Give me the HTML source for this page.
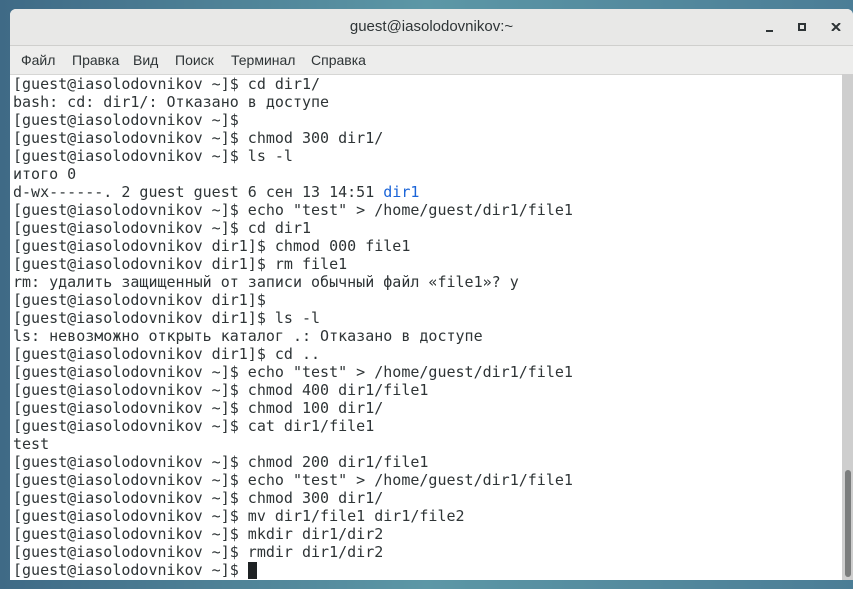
<!DOCTYPE html>
<html><head><meta charset="utf-8"><style>
body{margin:0;width:853px;height:589px;overflow:hidden;background:linear-gradient(90deg,#3f6a86 0%,#5c97a6 50%,#4b7d96 100%);position:relative;font-family:"Liberation Sans","DejaVu Sans",sans-serif}
.win{position:absolute;left:10px;top:9px;width:843px;height:571px;background:#fff;border-radius:6px 6px 0 0;overflow:hidden}
.title{height:36px;background:#e8e8e7;border-bottom:1px solid #cfcfcd;text-align:center;line-height:36px;font-size:15px;color:#2e3436;position:relative}
.menu{height:28px;background:#ededec;border-bottom:1px solid #d6d6d4;font-size:14px;color:#2e3436;line-height:28px;position:relative}
.menu span{position:absolute;top:0}
.term{position:absolute;left:3px;top:66px;font-family:"DejaVu Sans Mono",monospace;font-size:15px;line-height:18px;color:#2e3436;white-space:pre;margin:0}
.sb{position:absolute;left:832px;top:65px;width:11px;height:506px;background:#cecece}
.th{position:absolute;left:845px;top:470px;width:6px;height:107px;background:#7b7d7d;border-radius:3px}
.cur{display:inline-block;width:9px;height:17px;background:#1e2224;vertical-align:-4px}
.b{color:#1a64d8}
</style></head><body>
<div class="win">
<div class="title">guest@iasolodovnikov:~
<span style="position:absolute;left:756px;top:21px;width:7px;height:2px;background:#2e3436"></span>
<span style="position:absolute;left:788px;top:14px;width:4px;height:4px;border:2px solid #2e3436"></span>
<svg style="position:absolute;left:821px;top:14px" width="10" height="8"><path d="M1 0L9 8M9 0L1 8" stroke="#2e3436" stroke-width="2"/></svg></div>
<div class="menu"><span style="left:11px">Файл</span><span style="left:62px">Правка</span><span style="left:123px">Вид</span><span style="left:165px">Поиск</span><span style="left:221px">Терминал</span><span style="left:301px">Справка</span></div>
<div class="sb"></div>
<pre class="term">[guest@iasolodovnikov ~]$ cd dir1/
bash: cd: dir1/: Отказано в доступе
[guest@iasolodovnikov ~]$
[guest@iasolodovnikov ~]$ chmod 300 dir1/
[guest@iasolodovnikov ~]$ ls -l
итого 0
d-wx------. 2 guest guest 6 сен 13 14:51 <span class="b">dir1</span>
[guest@iasolodovnikov ~]$ echo "test" &gt; /home/guest/dir1/file1
[guest@iasolodovnikov ~]$ cd dir1
[guest@iasolodovnikov dir1]$ chmod 000 file1
[guest@iasolodovnikov dir1]$ rm file1
rm: удалить защищенный от записи обычный файл «file1»? y
[guest@iasolodovnikov dir1]$
[guest@iasolodovnikov dir1]$ ls -l
ls: невозможно открыть каталог .: Отказано в доступе
[guest@iasolodovnikov dir1]$ cd ..
[guest@iasolodovnikov ~]$ echo "test" &gt; /home/guest/dir1/file1
[guest@iasolodovnikov ~]$ chmod 400 dir1/file1
[guest@iasolodovnikov ~]$ chmod 100 dir1/
[guest@iasolodovnikov ~]$ cat dir1/file1
test
[guest@iasolodovnikov ~]$ chmod 200 dir1/file1
[guest@iasolodovnikov ~]$ echo "test" &gt; /home/guest/dir1/file1
[guest@iasolodovnikov ~]$ chmod 300 dir1/
[guest@iasolodovnikov ~]$ mv dir1/file1 dir1/file2
[guest@iasolodovnikov ~]$ mkdir dir1/dir2
[guest@iasolodovnikov ~]$ rmdir dir1/dir2
[guest@iasolodovnikov ~]$ <span class="cur"></span></pre>
</div>
<div class="th"></div>
</body></html>
